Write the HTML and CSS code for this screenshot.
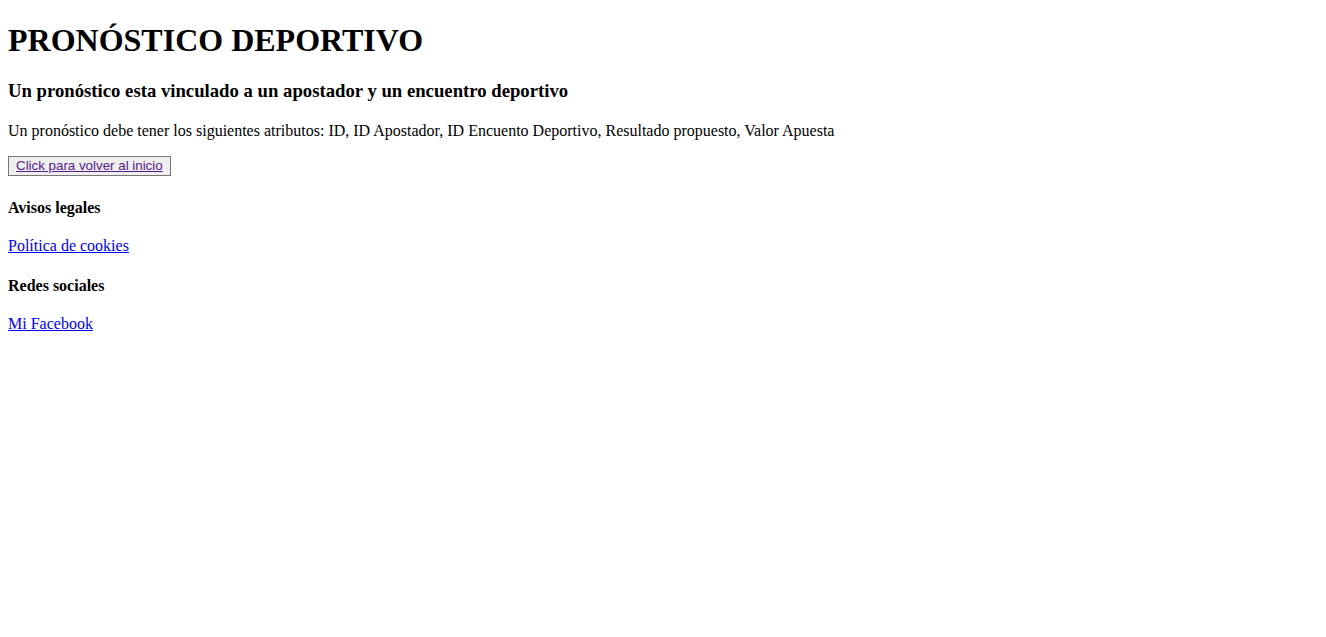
FILE: index.html
```html
<!DOCTYPE html>
<html lang="es">
<head>
<meta charset="utf-8">
<title>Pronóstico deportivo</title>
<link rel="stylesheet" href="styles.css">
</head>
<body class="page">
<h1 class="title">PRONÓSTICO DEPORTIVO</h1>
<h3 class="subtitle">Un pronóstico esta vinculado a un apostador y un encuentro deportivo</h3>
<p class="text">Un pronóstico debe tener los siguientes atributos: ID, ID Apostador, ID Encuento Deportivo, Resultado propuesto, Valor Apuesta</p>
<button class="btn"><a class="btn-link" href="#">Click para volver al inicio</a></button>
<h4 class="section">Avisos legales</h4>
<p class="text"><a class="link" href="#cookies">Política de cookies</a></p>
<h4 class="section">Redes sociales</h4>
<p class="text"><a class="link" href="#facebook">Mi Facebook</a></p>
</body>
</html>
```
FILE: styles.css
```css
html, body {
  background: #fff;
}
.page {
  margin: 8px;
  font-family: "Liberation Serif", "Times New Roman", serif;
  font-size: 16px;
  color: #000;
}
.title {
  font-size: 32px;
  font-weight: bold;
  margin: 14px 0 21px;
}
.subtitle {
  font-size: 18.72px;
  font-weight: bold;
  margin: 18.72px 0 19.72px;
}
.text {
  margin: 16px 0;
}
.section {
  font-size: 16px;
  font-weight: bold;
  margin: 21.28px 0 20.5px;
}
.btn {
  font-family: "Liberation Sans", Arial, sans-serif;
  font-size: 13.333px;
  padding: 1px 7px 2px;
  border: 1px solid #767676;
  border-radius: 0;
  background: #efefef;
  margin: -1px 0 2px;
}
.btn-link {
  color: #551a8b;
}
.link {
  color: #0000ee;
}
```
